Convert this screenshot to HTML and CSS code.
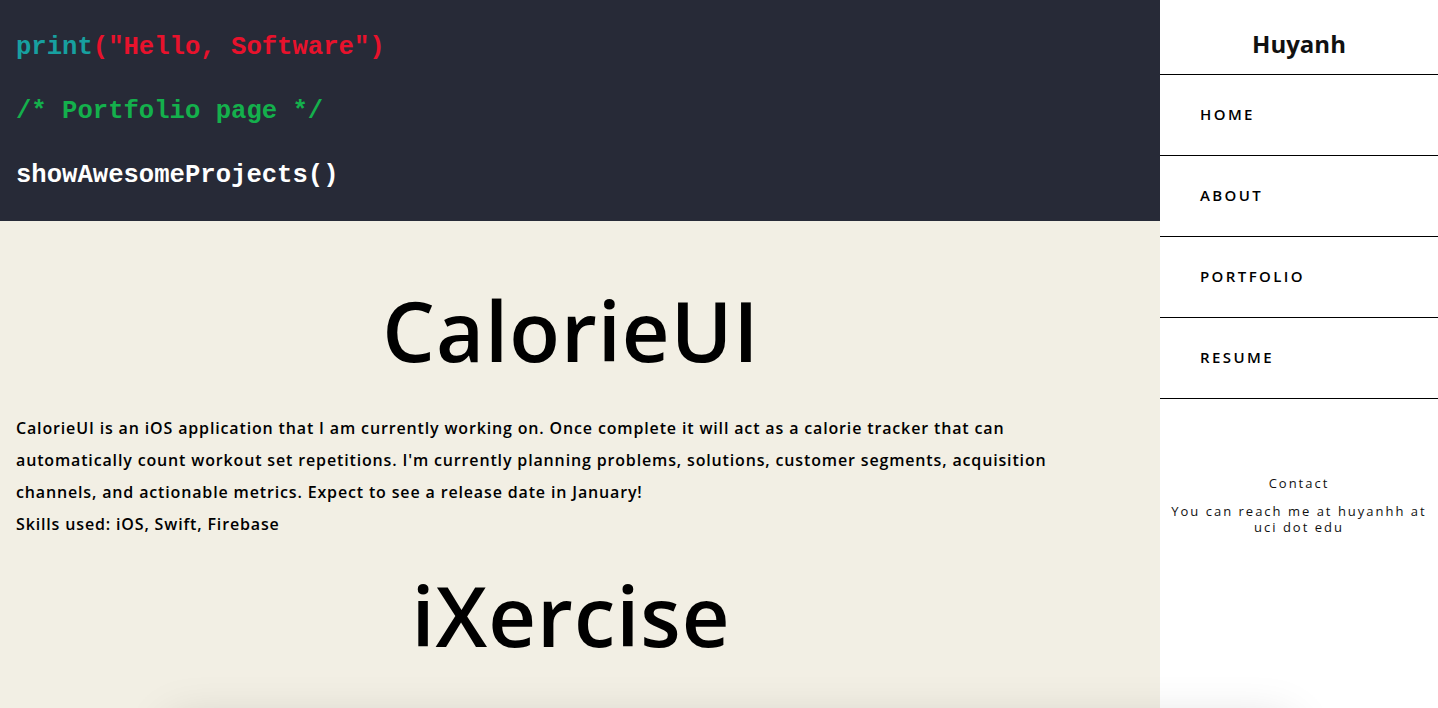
FILE: index.html
```html
<!DOCTYPE html>
<html lang="en">
<head>
<meta charset="utf-8">
<title>Huyanh - Portfolio</title>
<link rel="stylesheet" href="styles.css">
</head>
<body>
<div class="page">
  <main class="main">
    <header class="code-hero">
      <p class="code-line"><span class="fn">print</span><span class="str">("Hello, Software")</span></p>
      <p class="code-line comment">/* Portfolio page */</p>
      <p class="code-line call">showAwesomeProjects()</p>
    </header>
    <section class="projects">
      <article class="project">
        <h2 class="project-title">CalorieUI</h2>
        <p class="project-text">CalorieUI is an iOS application that I am currently working on. Once complete it will act as a calorie tracker that can automatically count workout set repetitions. I'm currently planning problems, solutions, customer segments, acquisition channels, and actionable metrics. Expect to see a release date in January!<br>Skills used: iOS, Swift, Firebase</p>
      </article>
      <article class="project">
        <h2 class="project-title second">iXercise</h2>
        <div class="project-shot"></div>
      </article>
    </section>
  </main>
  <aside class="sidebar">
    <div class="brand">Huyanh</div>
    <nav class="nav">
      <a class="nav-item" href="#">HOME</a>
      <a class="nav-item" href="#">ABOUT</a>
      <a class="nav-item" href="#">PORTFOLIO</a>
      <a class="nav-item" href="#">RESUME</a>
    </nav>
    <div class="contact">
      <p class="contact-title">Contact</p>
      <p class="contact-text">You can reach me at huyanhh at uci dot edu</p>
    </div>
  </aside>
</div>
</body>
</html>
```

FILE: styles.css
```css
html, body {
  margin: 0;
  padding: 0;
  height: 100%;
  overflow: hidden;
}
body {
  font-family: "Open Sans", "Liberation Sans", sans-serif;
  color: #111;
  background: #fff;
}
.page {
  display: flex;
  height: 708px;
}
.main {
  width: 1160px;
  flex: 0 0 1160px;
  background: #f2efe4;
}
.code-hero {
  background: #272a37;
  height: 221px;
  padding: 16px 16px 0;
  box-sizing: border-box;
}
.code-line {
  margin: 0;
  font-family: "Liberation Mono", "Courier New", monospace;
  font-weight: bold;
  font-size: 25.6px;
  line-height: 64px;
  height: 64px;
  color: #fff;
}
.fn { color: #17a0a0; }
.str { color: #e8122c; }
.comment { color: #14b04c; }
.call { color: #ffffff; }

.projects {
  padding: 0 34px 0 16px;
}
.project-title {
  margin: 0;
  text-align: center;
  font-size: 83px;
  font-weight: 600;
  letter-spacing: 1px;
  line-height: 100px;
  padding-top: 59px;
  color: #000;
}
.project-title.second {
  padding-top: 25px;
}
.project-text {
  margin: 32px 0 0;
  font-size: 16px;
  font-weight: 600;
  letter-spacing: 0.85px;
  line-height: 32px;
  max-width: 1060px;
  color: #000;
}
.project-shot {
  position: relative;
  z-index: 2;
  margin: 57px 0 0 154px;
  width: 1120px;
  height: 200px;
  background: #f2efe4;
  box-shadow: 0 0 45px rgba(0, 0, 0, 0.16);
}

.sidebar {
  flex: 1;
  background: #fff;
  display: flex;
  flex-direction: column;
}
.brand {
  height: 75px;
  box-sizing: border-box;
  border-bottom: 1px solid #000;
  display: flex;
  align-items: center;
  justify-content: center;
  padding-top: 12px;
  font-size: 24px;
  font-weight: 700;
}
.nav {
  display: flex;
  flex-direction: column;
}
.nav-item {
  display: flex;
  align-items: center;
  height: 81px;
  box-sizing: border-box;
  padding: 0 0 2px 40px;
  border-bottom: 1px solid #000;
  color: #000;
  text-decoration: none;
  font-size: 15px;
  font-weight: 600;
  letter-spacing: 2.4px;
}
.contact {
  padding-top: 76px;
  text-align: center;
  letter-spacing: 2px;
  font-size: 13px;
  font-weight: 500;
}
.contact-title {
  margin: 0 0 12px;
  line-height: 16px;
}
.contact-text {
  margin: 0 auto;
  line-height: 16px;
  padding: 0 8px;
}
```
